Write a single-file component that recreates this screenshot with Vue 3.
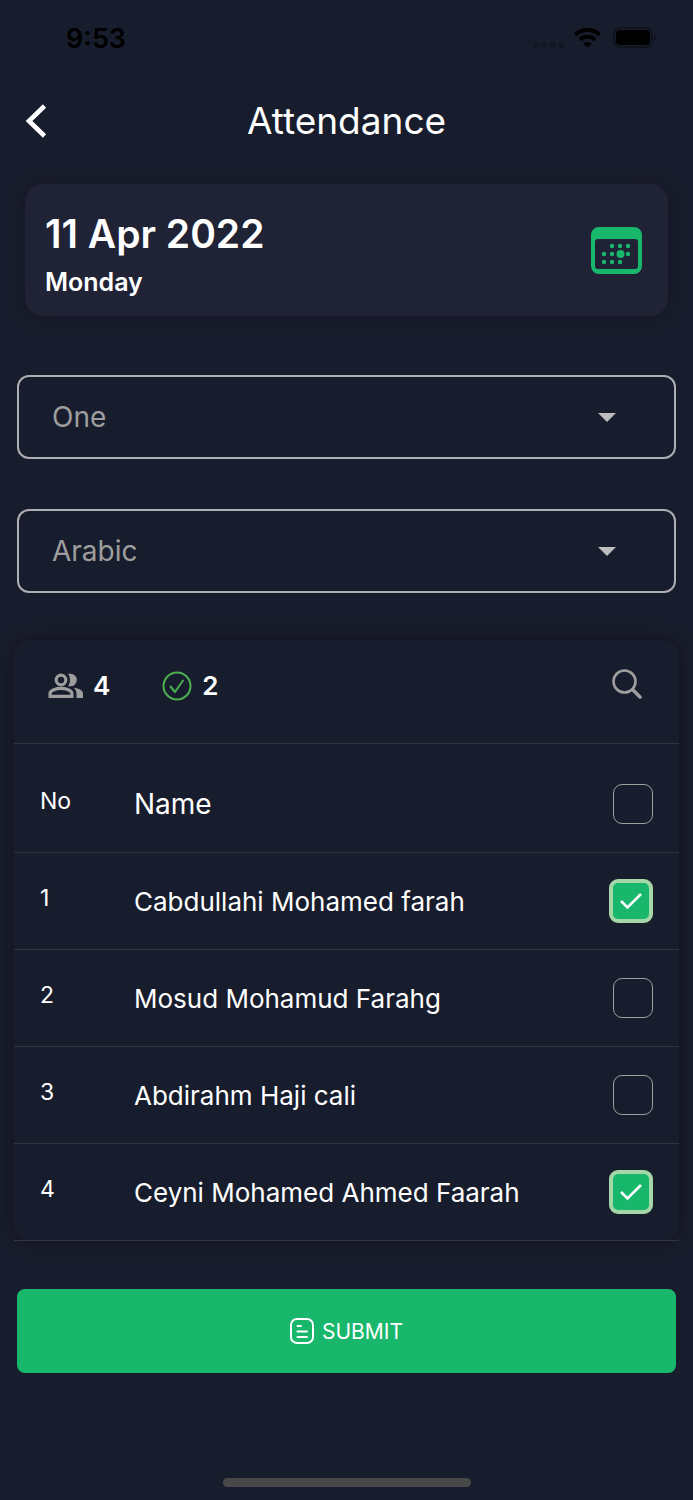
<script setup>
import { ref, computed } from 'vue'

const classes = ['One', 'Two', 'Three']
const subjects = ['Arabic', 'English', 'Maths']
const selectedClass = ref('One')
const selectedSubject = ref('Arabic')

const students = ref([
  { id: 1, name: 'Cabdullahi Mohamed farah', present: true },
  { id: 2, name: 'Mosud Mohamud Farahg', present: false },
  { id: 3, name: 'Abdirahm Haji cali', present: false },
  { id: 4, name: 'Ceyni Mohamed Ahmed Faarah', present: true },
])

const presentCount = computed(() => students.value.filter((s) => s.present).length)
const allPresent = computed({
  get: () => presentCount.value === students.value.length,
  set: (value) => students.value.forEach((s) => { s.present = value }),
})

const calendarDots = [
  [21, 19], [29, 19], [37, 19],
  [13, 27], [21, 27], [37, 27],
  [13, 35], [21, 35], [29, 35],
]
</script>

<template>
  <div class="screen">
    <div class="status">
      <span class="time">9:53</span>
      <svg class="status-icons" width="124" height="24" viewBox="0 0 124 24" aria-hidden="true">
        <g fill="#131624">
          <circle cx="4" cy="19" r="3" />
          <circle cx="12" cy="19" r="3" />
          <circle cx="21" cy="19" r="3" />
          <circle cx="29" cy="19" r="3" />
        </g>
        <g fill="none" stroke="#000" stroke-width="4">
          <path d="M43.500 8.700a18 18 0 0 1 24 0" />
          <path d="M48 13.800a11 11 0 0 1 15 0" />
        </g>
        <path d="M55.500 21.500l-4.200-4a6.300 6.300 0 0 1 8.400 0z" fill="#000" />
        <rect x="82" y="2" width="38" height="19" rx="6" fill="none" stroke="#10131e" stroke-width="2" />
        <rect x="84" y="4" width="34" height="15" rx="4" />
        <path d="M122.500 8c2 1 2 6 0 7z" fill="#10131e" />
      </svg>
    </div>

    <header class="bar">
      <button class="icon-button back" type="button" aria-label="Back">
        <svg width="22" height="34" viewBox="0 0 22 34">
          <path d="M19.500 2L4 17l15.500 15" fill="none" stroke="#fff" stroke-width="4.600" />
        </svg>
      </button>
      <h1>Attendance</h1>
    </header>

    <section class="date-card">
      <div>
        <p class="date">11 Apr 2022</p>
        <p class="day">Monday</p>
      </div>
      <button class="icon-button" type="button" aria-label="Choose date">
        <svg width="51" height="47" viewBox="0 0 51 47" fill="#18b76c">
          <path fill-rule="evenodd" d="M8 0h35a8 8 0 0 1 8 8v31a8 8 0 0 1-8 8H8a8 8 0 0 1-8-8V8a8 8 0 0 1 8-8zM7 12a3 3 0 0 0-3 3v24a3 3 0 0 0 3 3h37a3 3 0 0 0 3-3V15a3 3 0 0 0-3-3z" />
          <circle v-for="([x, y], i) in calendarDots" :key="i" :cx="x" :cy="y" r="2.200" />
          <circle cx="29.500" cy="27" r="4" />
        </svg>
      </button>
    </section>

    <div class="picker">
      <select v-model="selectedClass" aria-label="Class">
        <option v-for="c in classes" :key="c">{{ c }}</option>
      </select>
      <svg class="caret" width="18" height="9" viewBox="0 0 18 9" aria-hidden="true"><path d="M0 0h18L9 9z" fill="#bdbdbd" /></svg>
    </div>
    <div class="picker">
      <select v-model="selectedSubject" aria-label="Subject">
        <option v-for="s in subjects" :key="s">{{ s }}</option>
      </select>
      <svg class="caret" width="18" height="9" viewBox="0 0 18 9" aria-hidden="true"><path d="M0 0h18L9 9z" fill="#bdbdbd" /></svg>
    </div>

    <section class="panel">
      <div class="tools">
        <svg class="people" width="35" height="26" viewBox="0 0 35 26" aria-hidden="true">
          <g fill="none" stroke="#9e9e9e" stroke-width="3.200">
            <circle cx="13" cy="7" r="4.800" />
            <path d="M2.100 23.400v-3.100c0-3.100 6.400-4.900 10.900-4.900s10.900 1.800 10.900 4.900v3.100z" />
          </g>
          <path d="M20 .7h2.500a6.300 6.300 0 0 1 0 12.600H20c2.700-3.800 2.700-8.800 0-12.600z" fill="#9e9e9e" />
          <path d="M25.500 14.800c5.500.700 9.500 2.700 9.500 6V25h-6.500v-4.500c0-2.600-1.200-4.400-3-5.700z" fill="#9e9e9e" />
        </svg>
        <span class="count">{{ students.length }}</span>
        <svg class="done" width="30" height="30" viewBox="0 0 30 30" fill="none" stroke="#4caf50" stroke-width="2" stroke-linecap="round" stroke-linejoin="round" aria-hidden="true">
          <circle cx="15" cy="15" r="13.500" />
          <path d="M8.500 15.500l4.500 5.500L21 9.500" />
        </svg>
        <span class="count">{{ presentCount }}</span>
        <button class="icon-button search" type="button" aria-label="Search">
          <svg width="30" height="30" viewBox="0 0 30 30" fill="none" stroke="#9e9e9e" stroke-linecap="round">
            <circle cx="12.500" cy="12.500" r="11" stroke-width="2.600" />
            <path d="M21 21l7 7" stroke-width="3.600" />
          </svg>
        </button>
      </div>

      <table>
        <thead>
          <tr>
            <th class="no" scope="col">No</th>
            <th class="name" scope="col">Name</th>
            <th class="mark"><input v-model="allPresent" type="checkbox" aria-label="Mark all present" /></th>
          </tr>
        </thead>
        <tbody>
          <tr v-for="s in students" :key="s.id">
            <td class="no">{{ s.id }}</td>
            <td class="name"><label :for="`student-${s.id}`">{{ s.name }}</label></td>
            <td class="mark">
              <span class="check">
                <input :id="`student-${s.id}`" v-model="s.present" type="checkbox" />
                <svg v-if="s.present" width="24" height="18" viewBox="0 0 24 18" aria-hidden="true">
                  <path d="M2 9l6.500 6.500L22 2" fill="none" stroke="#fff" stroke-width="2.600" />
                </svg>
              </span>
            </td>
          </tr>
        </tbody>
      </table>
    </section>

    <button class="submit" type="button">
      <svg width="24" height="26" viewBox="0 0 24 26" fill="none" stroke="#fff" stroke-width="2" stroke-linecap="round" aria-hidden="true">
        <rect x="1" y="1" width="22" height="24" rx="6" />
        <path d="M7.500 8h3.500M7.500 13.500h9.500M7.500 19h9.500" />
      </svg>
      SUBMIT
    </button>

    <div class="home"></div>
  </div>
</template>

<style>
body {
  background: #181d2d;
}
</style>

<style scoped>
.screen {
  min-height: 100vh;
  box-sizing: border-box;
  display: flex;
  flex-direction: column;
  padding: 0 17px 13px;
  background: #181d2d;
  color: #fff;
  font-family: Inter, "Open Sans", sans-serif;
}

.status {
  height: 76px;
  display: flex;
  align-items: center;
  justify-content: space-between;
  padding: 0 20px 0 49px;
}

.time {
  color: #000;
  font-size: 27px;
  font-weight: 600;
}

.icon-button {
  display: flex;
  padding: 0;
  border: 0;
  background: none;
  cursor: pointer;
}

.bar {
  height: 90px;
  display: grid;
  grid-template-columns: 40px 1fr 40px;
  align-items: center;
}

.back {
  padding-left: 8px;
}

h1 {
  margin: 0;
  text-align: center;
  font-size: 37px;
  line-height: 44px;
  font-weight: 400;
}

.date-card {
  display: flex;
  align-items: center;
  justify-content: space-between;
  margin: 18px 8px 59px;
  height: 132px;
  padding: 0 26px 0 20px;
  box-sizing: border-box;
  border-radius: 18px;
  background: #1f2335;
  box-shadow: 0 0 18px rgba(22, 18, 30, 0.7);
}

.date,
.day {
  margin: 0;
  font-weight: 600;
}

.date {
  padding-top: 8px;
  font-size: 39px;
  line-height: 56px;
}

.day {
  font-size: 25px;
  line-height: 40px;
}

.picker {
  display: grid;
  align-items: center;
  margin-bottom: 50px;
}

.picker + .panel {
  margin-top: -3px;
}

.picker select,
.caret {
  grid-area: 1 / 1;
}

.picker select {
  appearance: none;
  width: 100%;
  height: 84px;
  padding: 0 33px;
  border: 2px solid #adadb2;
  border-radius: 12px;
  background: none;
  color: #9e9e9e;
  font: 400 28px Inter, sans-serif;
}

.caret {
  justify-self: end;
  margin-right: 60px;
  pointer-events: none;
}

.panel {
  margin: 0 -3px;
  border-radius: 18px;
  box-shadow: 0 0 18px rgba(22, 16, 28, 0.9);
}

.tools {
  display: flex;
  align-items: center;
  height: 103px;
  padding: 0 37px 12px 34px;
  box-sizing: border-box;
}

.count {
  margin-left: 10px;
  font-size: 26px;
  font-weight: 600;
}

.done {
  margin-left: 52px;
}

.search {
  margin-left: auto;
  padding-bottom: 3px;
}

table {
  width: 100%;
  border-collapse: collapse;
}

tr {
  height: 97px;
  border-bottom: 1px solid #303443;
}

thead tr {
  height: 109px;
  border-top: 1px solid #303443;
}

th,
td {
  padding: 0;
  text-align: left;
  font-weight: 400;
  vertical-align: middle;
}

th {
  padding-top: 12px;
}

.no {
  width: 94px;
  padding-left: 26px;
  padding-bottom: 7px;
  font-size: 23px;
}

td.name {
  font-size: 26px;
}

th.name {
  font-size: 28px;
}

.mark {
  width: 60px;
  padding-right: 26px;
}

.mark input {
  appearance: none;
  display: block;
  width: 40px;
  height: 40px;
  margin: 0 0 0 auto;
  border: 1px solid #9e9e9e;
  border-radius: 9px;
}

.mark input:checked {
  width: 44px;
  height: 44px;
  border: 4px solid #a5d6a7;
  background: #18b76c;
}

.check {
  display: grid;
  align-items: center;
}

.check > * {
  grid-area: 1 / 1;
}

.check svg {
  justify-self: end;
  margin-right: 10px;
  pointer-events: none;
}

.submit {
  display: flex;
  align-items: center;
  justify-content: center;
  gap: 8px;
  height: 84px;
  margin-top: 48px;
  border: 0;
  border-radius: 8px;
  background: #18b76c;
  color: #fff;
  font: 400 21px Inter, sans-serif;
}

.home {
  width: 248px;
  height: 9px;
  margin: auto auto 0;
  border-radius: 5px;
  background: #484848;
}
</style>
